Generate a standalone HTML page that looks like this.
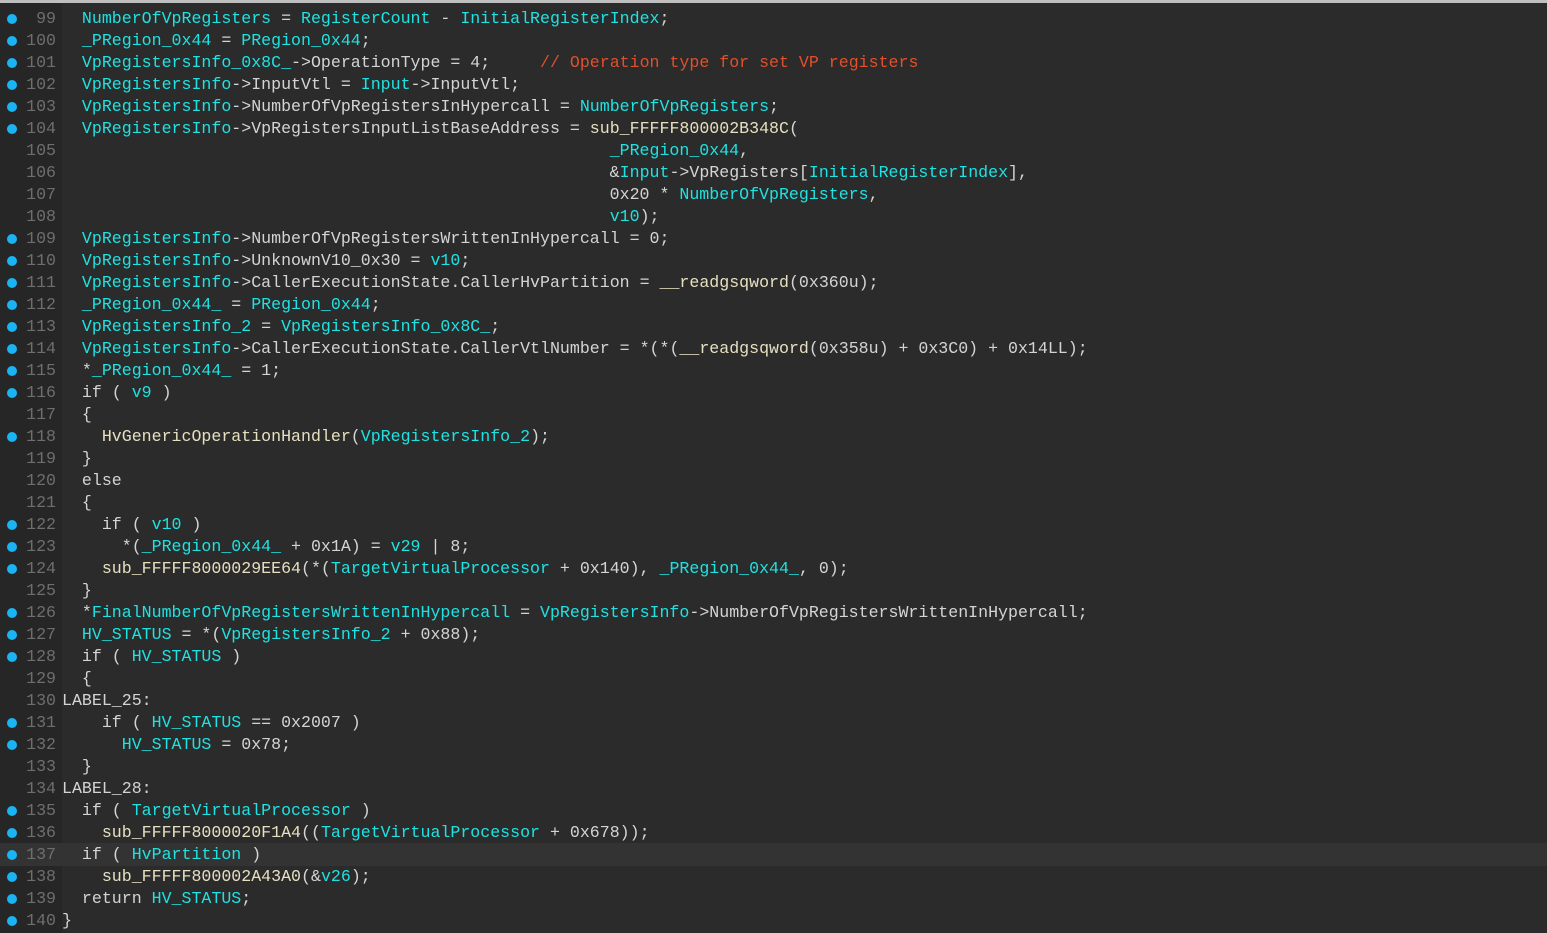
<!DOCTYPE html>
<html><head><meta charset="utf-8"><style>
html,body{margin:0;padding:0;}
body{width:1547px;height:933px;background:#2b2b2b;overflow:hidden;position:relative;font-family:"Liberation Mono",monospace;font-size:16.6px;}
#top{position:absolute;left:0;top:0;width:1547px;height:3px;background:#bfbfbf;}
#gut{position:absolute;left:0;top:3px;width:62px;height:930px;background:#262626;}
.l{position:absolute;left:0;width:1547px;height:22px;line-height:22px;white-space:pre;color:#d4d4d4;}
.hl{background:#333333;}
.d{position:absolute;left:7px;top:6px;width:10px;height:10px;border-radius:50%;background:#1ab4f5;}
.n{position:absolute;left:18px;width:38px;text-align:right;color:#6e6e6e;}
.t{position:absolute;left:62px;}
.c{color:#1fe2e2;}
.f{color:#e6dfc0;}
.m{color:#e0502c;}
</style></head><body>
<div id="top"></div><div id="gut"></div>
<div class="l" style="top:8px"><i class="d"></i><span class="n">99</span><span class="t">  <span class="c">NumberOfVpRegisters</span> = <span class="c">RegisterCount</span> - <span class="c">InitialRegisterIndex</span>;</span></div>
<div class="l" style="top:30px"><i class="d"></i><span class="n">100</span><span class="t">  <span class="c">_PRegion_0x44</span> = <span class="c">PRegion_0x44</span>;</span></div>
<div class="l" style="top:52px"><i class="d"></i><span class="n">101</span><span class="t">  <span class="c">VpRegistersInfo_0x8C_</span>->OperationType = 4;     <span class="m">// Operation type for set VP registers</span></span></div>
<div class="l" style="top:74px"><i class="d"></i><span class="n">102</span><span class="t">  <span class="c">VpRegistersInfo</span>->InputVtl = <span class="c">Input</span>->InputVtl;</span></div>
<div class="l" style="top:96px"><i class="d"></i><span class="n">103</span><span class="t">  <span class="c">VpRegistersInfo</span>->NumberOfVpRegistersInHypercall = <span class="c">NumberOfVpRegisters</span>;</span></div>
<div class="l" style="top:118px"><i class="d"></i><span class="n">104</span><span class="t">  <span class="c">VpRegistersInfo</span>->VpRegistersInputListBaseAddress = <span class="f">sub_FFFFF800002B348C</span>(</span></div>
<div class="l" style="top:140px"><span class="n">105</span><span class="t">                                                       <span class="c">_PRegion_0x44</span>,</span></div>
<div class="l" style="top:162px"><span class="n">106</span><span class="t">                                                       &amp;<span class="c">Input</span>->VpRegisters[<span class="c">InitialRegisterIndex</span>],</span></div>
<div class="l" style="top:184px"><span class="n">107</span><span class="t">                                                       0x20 * <span class="c">NumberOfVpRegisters</span>,</span></div>
<div class="l" style="top:206px"><span class="n">108</span><span class="t">                                                       <span class="c">v10</span>);</span></div>
<div class="l" style="top:228px"><i class="d"></i><span class="n">109</span><span class="t">  <span class="c">VpRegistersInfo</span>->NumberOfVpRegistersWrittenInHypercall = 0;</span></div>
<div class="l" style="top:250px"><i class="d"></i><span class="n">110</span><span class="t">  <span class="c">VpRegistersInfo</span>->UnknownV10_0x30 = <span class="c">v10</span>;</span></div>
<div class="l" style="top:272px"><i class="d"></i><span class="n">111</span><span class="t">  <span class="c">VpRegistersInfo</span>->CallerExecutionState.CallerHvPartition = <span class="f">__readgsqword</span>(0x360u);</span></div>
<div class="l" style="top:294px"><i class="d"></i><span class="n">112</span><span class="t">  <span class="c">_PRegion_0x44_</span> = <span class="c">PRegion_0x44</span>;</span></div>
<div class="l" style="top:316px"><i class="d"></i><span class="n">113</span><span class="t">  <span class="c">VpRegistersInfo_2</span> = <span class="c">VpRegistersInfo_0x8C_</span>;</span></div>
<div class="l" style="top:338px"><i class="d"></i><span class="n">114</span><span class="t">  <span class="c">VpRegistersInfo</span>->CallerExecutionState.CallerVtlNumber = *(*(<span class="f">__readgsqword</span>(0x358u) + 0x3C0) + 0x14LL);</span></div>
<div class="l" style="top:360px"><i class="d"></i><span class="n">115</span><span class="t">  *<span class="c">_PRegion_0x44_</span> = 1;</span></div>
<div class="l" style="top:382px"><i class="d"></i><span class="n">116</span><span class="t">  if ( <span class="c">v9</span> )</span></div>
<div class="l" style="top:404px"><span class="n">117</span><span class="t">  {</span></div>
<div class="l" style="top:426px"><i class="d"></i><span class="n">118</span><span class="t">    <span class="f">HvGenericOperationHandler</span>(<span class="c">VpRegistersInfo_2</span>);</span></div>
<div class="l" style="top:448px"><span class="n">119</span><span class="t">  }</span></div>
<div class="l" style="top:470px"><span class="n">120</span><span class="t">  else</span></div>
<div class="l" style="top:492px"><span class="n">121</span><span class="t">  {</span></div>
<div class="l" style="top:514px"><i class="d"></i><span class="n">122</span><span class="t">    if ( <span class="c">v10</span> )</span></div>
<div class="l" style="top:536px"><i class="d"></i><span class="n">123</span><span class="t">      *(<span class="c">_PRegion_0x44_</span> + 0x1A) = <span class="c">v29</span> | 8;</span></div>
<div class="l" style="top:558px"><i class="d"></i><span class="n">124</span><span class="t">    <span class="f">sub_FFFFF8000029EE64</span>(*(<span class="c">TargetVirtualProcessor</span> + 0x140), <span class="c">_PRegion_0x44_</span>, 0);</span></div>
<div class="l" style="top:580px"><span class="n">125</span><span class="t">  }</span></div>
<div class="l" style="top:602px"><i class="d"></i><span class="n">126</span><span class="t">  *<span class="c">FinalNumberOfVpRegistersWrittenInHypercall</span> = <span class="c">VpRegistersInfo</span>->NumberOfVpRegistersWrittenInHypercall;</span></div>
<div class="l" style="top:624px"><i class="d"></i><span class="n">127</span><span class="t">  <span class="c">HV_STATUS</span> = *(<span class="c">VpRegistersInfo_2</span> + 0x88);</span></div>
<div class="l" style="top:646px"><i class="d"></i><span class="n">128</span><span class="t">  if ( <span class="c">HV_STATUS</span> )</span></div>
<div class="l" style="top:668px"><span class="n">129</span><span class="t">  {</span></div>
<div class="l" style="top:690px"><span class="n">130</span><span class="t">LABEL_25:</span></div>
<div class="l" style="top:712px"><i class="d"></i><span class="n">131</span><span class="t">    if ( <span class="c">HV_STATUS</span> == 0x2007 )</span></div>
<div class="l" style="top:734px"><i class="d"></i><span class="n">132</span><span class="t">      <span class="c">HV_STATUS</span> = 0x78;</span></div>
<div class="l" style="top:756px"><span class="n">133</span><span class="t">  }</span></div>
<div class="l" style="top:778px"><span class="n">134</span><span class="t">LABEL_28:</span></div>
<div class="l" style="top:800px"><i class="d"></i><span class="n">135</span><span class="t">  if ( <span class="c">TargetVirtualProcessor</span> )</span></div>
<div class="l" style="top:822px"><i class="d"></i><span class="n">136</span><span class="t">    <span class="f">sub_FFFFF8000020F1A4</span>((<span class="c">TargetVirtualProcessor</span> + 0x678));</span></div>
<div class="l hl" style="top:843px;height:23px"><i class="d" style="top:7px"></i><span class="n" style="top:1px">137</span><span class="t" style="top:1px">  if ( <span class="c">HvPartition</span> )</span></div>
<div class="l" style="top:866px"><i class="d"></i><span class="n">138</span><span class="t">    <span class="f">sub_FFFFF800002A43A0</span>(&amp;<span class="c">v26</span>);</span></div>
<div class="l" style="top:888px"><i class="d"></i><span class="n">139</span><span class="t">  return <span class="c">HV_STATUS</span>;</span></div>
<div class="l" style="top:910px"><i class="d"></i><span class="n">140</span><span class="t">}</span></div>
</body></html>
